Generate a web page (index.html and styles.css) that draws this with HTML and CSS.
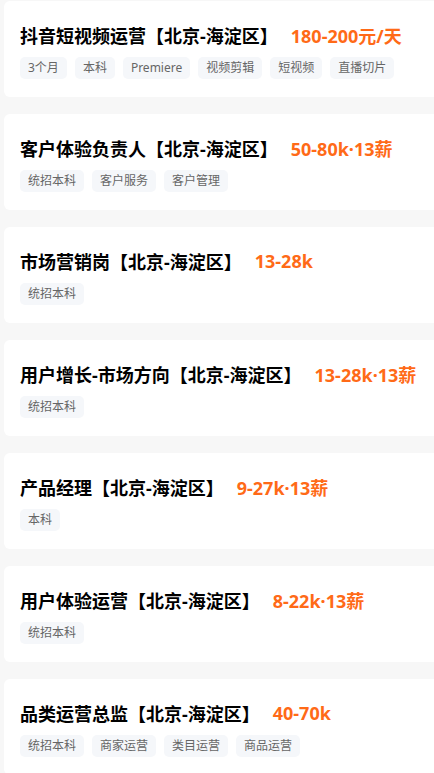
FILE: index.html
```html
<!DOCTYPE html>
<html lang="zh-CN">
<head>
  <meta charset="UTF-8" />
  <title>职位列表</title>
  <link rel="stylesheet" href="styles.css">
</head>
<body>

<div class="job-list">

  <div class="job-card">
    <div class="job-head">
      <span class="job-title">抖音短视频运营【北京-海淀区】</span>
      <span class="job-salary">180-200元/天</span>
    </div>
    <div class="job-tags">
      <span class="tag">3个月</span>
      <span class="tag">本科</span>
      <span class="tag">Premiere</span>
      <span class="tag">视频剪辑</span>
      <span class="tag">短视频</span>
      <span class="tag">直播切片</span>
    </div>
  </div>

  <div class="job-card">
    <div class="job-head">
      <span class="job-title">客户体验负责人【北京-海淀区】</span>
      <span class="job-salary">50-80k·13薪</span>
    </div>
    <div class="job-tags">
      <span class="tag">统招本科</span>
      <span class="tag">客户服务</span>
      <span class="tag">客户管理</span>
    </div>
  </div>

  <div class="job-card">
    <div class="job-head">
      <span class="job-title">市场营销岗【北京-海淀区】</span>
      <span class="job-salary">13-28k</span>
    </div>
    <div class="job-tags">
      <span class="tag">统招本科</span>
    </div>
  </div>

  <div class="job-card">
    <div class="job-head">
      <span class="job-title">用户增长-市场方向【北京-海淀区】</span>
      <span class="job-salary">13-28k·13薪</span>
    </div>
    <div class="job-tags">
      <span class="tag">统招本科</span>
    </div>
  </div>

  <div class="job-card">
    <div class="job-head">
      <span class="job-title">产品经理【北京-海淀区】</span>
      <span class="job-salary">9-27k·13薪</span>
    </div>
    <div class="job-tags">
      <span class="tag">本科</span>
    </div>
  </div>

  <div class="job-card">
    <div class="job-head">
      <span class="job-title">用户体验运营【北京-海淀区】</span>
      <span class="job-salary">8-22k·13薪</span>
    </div>
    <div class="job-tags">
      <span class="tag">统招本科</span>
    </div>
  </div>

  <div class="job-card">
    <div class="job-head">
      <span class="job-title">品类运营总监【北京-海淀区】</span>
      <span class="job-salary">40-70k</span>
    </div>
    <div class="job-tags">
      <span class="tag">统招本科</span>
      <span class="tag">商家运营</span>
      <span class="tag">类目运营</span>
      <span class="tag">商品运营</span>
    </div>
  </div>

</div>

</body>
</html>
```

FILE: styles.css
```css
:root {
  --bg-color: #f7f7f7;
  --card-color: #fff;
  --title-color: #000;
  --salary-color: #ff6a17;
  --tag-bg: #f5f7fa;
  --tag-color: #666;
}

html {
  overflow: hidden;
}

body {
  font-family: "Noto Sans", "Noto Sans CJK SC", sans-serif;
  background: var(--bg-color);
  margin: 0;
  padding: 0;
}

.job-list {
  display: flex;
  flex-direction: column;
  gap: 17px;
  padding: 1px 0 0 4px;
}

.job-card {
  background: var(--card-color);
  border-radius: 6px;
  margin-right: -12px;
  padding: 22px 16px 18px;
}

.job-head {
  display: flex;
  align-items: center;
  gap: 13px;
  height: 24px;
  margin-bottom: 10px;
  white-space: nowrap;
}

.job-title {
  font-size: 18px;
  font-weight: bold;
  color: var(--title-color);
}

.job-salary {
  font-size: 18px;
  font-weight: bold;
  color: var(--salary-color);
}

.job-tags {
  display: flex;
  gap: 8px;
}

.tag {
  height: 22px;
  line-height: 22px;
  padding: 0 8px;
  border-radius: 5px;
  background: var(--tag-bg);
  color: var(--tag-color);
  font-size: 12px;
}
```
